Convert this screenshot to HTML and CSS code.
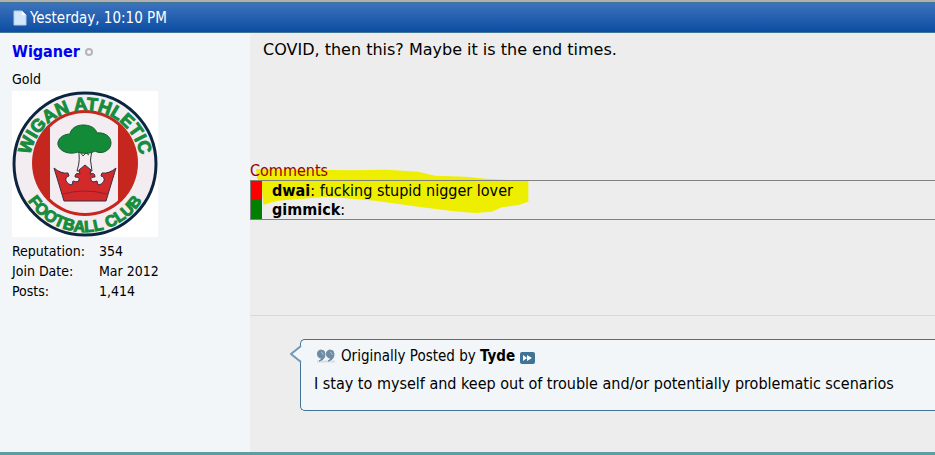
FILE: index.html
```html
<!DOCTYPE html>
<html lang="en">
<head>
<meta charset="UTF-8">
<meta name="viewport" content="width=device-width, initial-scale=1.0">
<title>Forum Thread</title>
<link rel="stylesheet" href="styles.css">
</head>
<body>

<article class="post">
  <header class="posthead">
    <svg class="post-icon" width="14" height="16" viewBox="0 0 14 16">
      <path d="M1 1h8l4 4v10H1z" fill="#d3e6fb" stroke="#b4cdec"/>
      <path d="M9 1v4h4z" fill="#fff"/>
    </svg>
    <span>Yesterday, 10:10 PM</span>
  </header>

  <div class="postdetails">
    <aside class="userinfo">
      <div class="username">
        <a href="#">Wiganer</a>
        <span class="offline"></span>
      </div>
      <div class="usertitle">Gold</div>
      <svg class="avatar" width="146" height="146" viewBox="0 0 146 146">
        <defs>
          <path id="topArc" d="M17 75a56 56 0 0 1 112 0"/>
          <path id="bottomArc" d="M5 73a68 68 0 0 0 136 0"/>
          <clipPath id="inner"><circle cx="73" cy="72" r="50"/></clipPath>
        </defs>
        <rect width="146" height="146" fill="#fff"/>
        <circle cx="73" cy="73" r="71" fill="#f3edf1" stroke="#0b2540" stroke-width="3"/>
        <circle cx="73" cy="72" r="53" fill="#c5261d"/>
        <rect x="38" y="20" width="68" height="104" fill="#f3edf1" clip-path="url(#inner)"/>
        <path d="M66 58q3 10-1 22h15q-3-11 0-22" fill="#f3edf1" stroke="#333" stroke-width="1"/>
        <path d="M68 61l3 4 3-3 3 2" fill="none" stroke="#444" stroke-width="1"/>
        <path d="M58 43c1-6 7-9 13-9s12 2 14 8c7-1 14 3 14 10 0 8-10 12-16 8-5 3-12 3-17 1-8 3-18 0-20-7-1-6 5-11 12-11z" fill="#128a38" stroke="#175b33"/>
        <path d="M42 77q7 6 14 5l1 3q-4 1-3 5 2 4 6 4l1-4q5 2 6-1t-4-3q0-5 5-3l-1-4 6-5 6 5-1 4q5-2 5 3-5 0-4 3t6 1l1 4q4 0 6-4 1-4-3-5l1-3q7 1 14-5l-10 33H52z" fill="#d3292a" stroke="#353041" stroke-width="1"/>
        <path d="M51 103q22-6 44 0" fill="none" stroke="#8d2230" stroke-width="1"/>
        <text class="crest-top"><textPath href="#topArc" startOffset="50%">WIGAN ATHLETIC</textPath></text>
        <text class="crest-bottom"><textPath href="#bottomArc" startOffset="50%">FOOTBALL CLUB</textPath></text>
      </svg>
      <dl class="stats">
        <dt>Reputation:</dt><dd>354</dd>
        <dt>Join Date:</dt><dd>Mar 2012</dd>
        <dt>Posts:</dt><dd>1,414</dd>
      </dl>
    </aside>

    <div class="postbody">
      <p class="message">COVID, then this? Maybe it is the end times.</p>

      <section class="comments">
        <svg class="marker" width="300" height="80" viewBox="0 0 900 240">
          <path d="M33 57L320 61 425 59 520 65 570 77 660 80 720 86 850 93 850 155 820 165 770 172 740 185 690 189 620 183 520 170 390 152 250 140 150 148 100 152 75 158 55 165 50 105 36 85z" fill="#eeee00"/>
        </svg>
        <h2>Comments</h2>
        <ul>
          <li class="negative"><b>dwai</b>: fucking stupid nigger lover</li>
          <li class="positive"><b>gimmick</b>:</li>
        </ul>
      </section>

      <div class="signature">
        <blockquote class="quote">
          <svg class="quote-arrow" width="12" height="18" viewBox="0 0 12 18">
            <path d="M12 1L1 9l11 8z" fill="#f2f6f9"/>
            <path d="M11 1L1 9l10 8" fill="none" stroke="#6f9ab5" stroke-width="2"/>
          </svg>
          <div class="quote-by">
            <svg width="20" height="14" viewBox="0 0 20 14">
              <path d="M1 12.500h18" stroke="#d5dde3" stroke-width="2"/>
              <path d="M5 1a4 4 0 1 0 1 8q-1 2-3 3 6-1 6-7 0-4-4-4zM14 1a4 4 0 1 0 1 8q-1 2-3 3 6-1 6-7 0-4-4-4z" fill="#6d8ca3" stroke="#6d8ca3"/>
              <path d="M5 3q2 0 2 3M14 3q2 0 2 3" fill="none" stroke="#a9bfce"/>
            </svg>
            <span>Originally Posted by <b>Tyde</b></span>
            <a class="view-post" href="#" aria-label="View Post">
              <svg width="15" height="12" viewBox="0 0 15 12">
                <rect width="15" height="12" rx="2" fill="#417394"/>
                <path d="M3 3l4 3-4 3zM7 3l5 3-5 3z" fill="#fff"/>
              </svg>
            </a>
          </div>
          <p>I stay to myself and keep out of trouble and/or potentially problematic scenarios</p>
        </blockquote>
      </div>
    </div>
  </div>
</article>

</body>
</html>
```
FILE: styles.css
```css
body {
  margin: 0;
  background-color: #ededed;
  color: #000;
  font-family: "DejaVu Sans Condensed", Tahoma, sans-serif;
  font-size: 16px;
}

.post {
  border-top: 2px solid #b0b0b0;
  border-bottom: 3px solid #5f9ea0;
}

.posthead {
  display: flex;
  align-items: center;
  gap: 3px;
  height: 29px;
  padding-left: 13px;
  border-top: 1px solid #417394;
  border-bottom: 1px solid #417394;
  background: linear-gradient(#3c73bd, #0c4da2);
  color: #fff;
  font-size: 15px;
}

.postdetails {
  display: flex;
}

.userinfo {
  flex: 0 0 238px;
  padding: 8px 0 0 12px;
  background-color: #f2f6f9;
  font-size: 14px;
}

.username {
  display: flex;
  align-items: center;
  gap: 5px;
  line-height: 22px;
  font-size: 16px;
  font-weight: bold;
}

.username a {
  color: #0000ee;
  text-decoration: none;
}

.offline {
  width: 4px;
  height: 4px;
  border: 2px solid #b5b5b5;
  border-radius: 50%;
}

.usertitle {
  padding-top: 6px;
  line-height: 20px;
}

.avatar {
  display: block;
  margin-top: 2px;
}

.crest-top,
.crest-bottom {
  fill: #168c3c;
  stroke: #168c3c;
  stroke-width: 1px;
  font-family: "Liberation Sans", Arial, sans-serif;
  font-weight: bold;
  text-anchor: middle;
}

.crest-top {
  font-size: 18px;
}

.crest-bottom {
  font-size: 16px;
}

.stats {
  display: grid;
  grid-template-columns: 87px 1fr;
  margin: 4px 0 0;
  line-height: 20px;
}

.stats dd {
  margin: 0;
}

.postbody {
  flex: 1;
  min-width: 0;
}

.message {
  min-height: 122px;
  margin: 0;
  padding: 7px 13px 0;
  font-family: "DejaVu Sans", Verdana, sans-serif;
  line-height: 20px;
}

.comments {
  position: relative;
  isolation: isolate;
  margin-bottom: 95px;
}

.marker {
  position: absolute;
  top: -12px;
  left: -5px;
  z-index: -1;
}

.comments h2 {
  margin: 0;
  color: #990000;
  font-size: 16px;
  font-weight: normal;
  line-height: 18px;
}

.comments ul {
  margin: 0;
  padding: 0;
  border: 1px solid #808080;
  border-right: none;
  list-style: none;
}

.comments li {
  padding-left: 10px;
  border-left: 11px solid green;
  line-height: 19px;
}

.comments li.negative {
  border-left-color: red;
}

.signature {
  padding: 23px 0 41px 50px;
  border-top: 1px solid #d8d8d8;
}

.quote {
  position: relative;
  margin: 0;
  padding: 6px 13px 16px;
  border: 1px solid #417394;
  border-right: none;
  border-radius: 5px 0 0 5px;
  background-color: #f2f6f9;
  line-height: 20px;
}

.quote-arrow {
  position: absolute;
  top: 5px;
  left: -11px;
}

.quote-by {
  display: flex;
  align-items: center;
  gap: 5px;
  padding-left: 2px;
  font-size: 15px;
}

.view-post {
  display: flex;
  padding-top: 4px;
}

.quote p {
  margin: 8px 0 0;
}
```
